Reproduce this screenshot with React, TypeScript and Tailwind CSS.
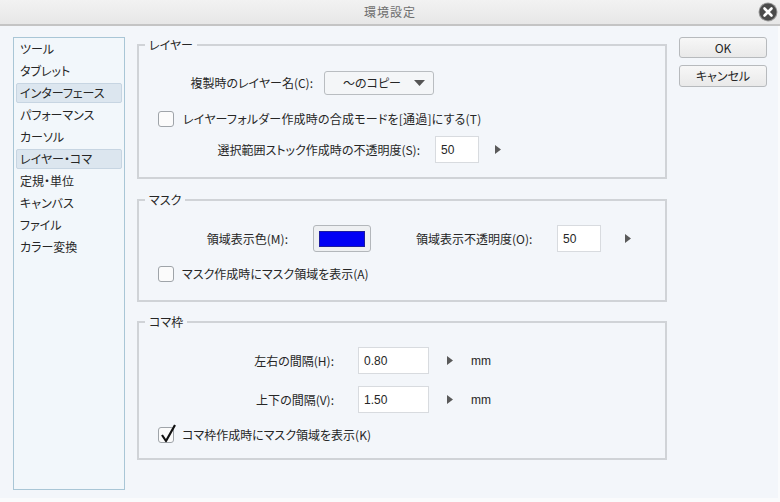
import React from 'react'

const categories = [
  'ツール',
  'タブレット',
  'インターフェース',
  'パフォーマンス',
  'カーソル',
  'レイヤー・コマ',
  '定規・単位',
  'キャンバス',
  'ファイル',
  'カラー変換',
]

// items drawn with the pale blue highlight
const highlighted = ['インターフェース', 'レイヤー・コマ']

function CloseIcon() {
  return (
    <svg width="20" height="20" viewBox="0 0 20 20">
      <circle cx="10" cy="10" r="9.5" fill="#9a9a9a" />
      <circle cx="10" cy="10" r="8.5" fill="#4b4b4b" />
      <path d="M6.5 6.5 L13.5 13.5 M13.5 6.5 L6.5 13.5" stroke="#ffffff" strokeWidth="2.6" strokeLinecap="round" />
    </svg>
  )
}

function RightArrow() {
  return (
    <svg width="6" height="9" viewBox="0 0 6 9" className="shrink-0">
      <path d="M0 0 L6 4.5 L0 9 Z" fill="#5a5a5a" />
    </svg>
  )
}

function Checkbox({ checked = false }: { checked?: boolean }) {
  return (
    <div className="relative w-[16px] h-[16px] shrink-0 rounded-[3px] border border-[#9fa4a9] bg-[#fbfbfb]">
      {checked && (
        <svg width="18" height="20" viewBox="0 0 18 20" className="absolute left-[1px] top-[-5px] overflow-visible">
          <path d="M2 12 L6 18 L15 2" fill="none" stroke="#111111" strokeWidth="2.2" strokeLinejoin="round" />
        </svg>
      )}
    </div>
  )
}

function NumberField({ value, width }: { value: string; width: string }) {
  return (
    <div className={`${width} h-[27px] shrink-0 flex items-center pl-[5px] bg-white border border-[#d8dbdf] text-[12px] font-['Liberation_Sans',sans-serif]`}>
      {value}
    </div>
  )
}

function Group({ title, children, className = '' }: { title: string; children: React.ReactNode; className?: string }) {
  return (
    <fieldset className={`border-2 border-[#d0d3d7] ${className}`}>
      <legend className="ml-[6px] px-[4px] leading-[16px] h-[16px]">{title}</legend>
      {children}
    </fieldset>
  )
}

export default function App() {
  return (
    <div className="w-[780px] h-[502px] bg-[#fafbfc] text-[12px] leading-[16px] text-[#262626] font-['Noto_Sans_CJK_JP',sans-serif] [font-feature-settings:'palt'] overflow-hidden">
      {/* title bar */}
      <div className="relative h-[26px] border-b-2 border-[#c4c4c4] bg-gradient-to-b from-[#f2f2f2] to-[#e7e7e7] flex items-center justify-center">
        <span className="text-[#6e6e6e] text-[12px] tracking-[1px]">環境設定</span>
        <div className="absolute right-[2px] top-[2px]">
          <CloseIcon />
        </div>
      </div>

      <div className="w-[778px] h-[472px] bg-[#f3f6fa] flex pt-[11px]">
        {/* category list */}
        <div className="ml-[13px] w-[112px] h-[453px] border border-[#a9c6d6] bg-[#f2f7fb] flex flex-col gap-[2px] pt-[1px]">
          {categories.map((c) => (
            <div
              key={c}
              className={`mx-[2px] h-[20px] shrink-0 flex items-center pl-[3px] rounded-[2px] border ${
                highlighted.includes(c) ? 'bg-[#dce6ef] border-[#c7d5e2]' : 'border-transparent'
              }`}
            >
              {c}
            </div>
          ))}
        </div>

        {/* settings groups */}
        <div className="ml-[12px] w-[530px] flex flex-col">
          <Group title="レイヤー" className="pb-[14px]">
            <div className="mt-[18px] h-[24px] flex items-center">
              <div className="w-[174px] text-right">複製時のレイヤー名(C):</div>
              <div className="ml-[11px] w-[110px] h-[24px] flex items-center justify-between pl-[18px] pr-[8px] rounded-[3px] border border-[#b9bdc1] bg-[#f4f6f8]">
                <span>～のコピー</span>
                <svg width="11" height="6" viewBox="0 0 11 6">
                  <path d="M0 0 L11 0 L5.5 6 Z" fill="#555555" />
                </svg>
              </div>
            </div>
            <div className="mt-[15px] h-[18px] flex items-center">
              <div className="ml-[19px]">
                <Checkbox />
              </div>
              <span className="ml-[9px] tracking-[0.2px]">レイヤーフォルダー作成時の合成モードを[通過]にする(T)</span>
            </div>
            <div className="mt-[8px] h-[27px] flex items-center">
              <div className="w-[281px] text-right">選択範囲ストック作成時の不透明度(S):</div>
              <div className="ml-[15px]">
                <NumberField value="50" width="w-[44px]" />
              </div>
              <div className="ml-[16px]">
                <RightArrow />
              </div>
            </div>
          </Group>

          <Group title="マスク" className="mt-[13px] pb-[18px]">
            <div className="mt-[17px] h-[27px] flex items-center">
              <div className="w-[149px] text-right">領域表示色(M):</div>
              <div className="ml-[25px] w-[58px] h-[27px] flex items-center justify-center rounded-[3px] border border-[#b3b7bb] bg-[#eef0f2]">
                <div className="w-[46px] h-[16px] bg-[#0000f5] border border-[#1b1b9c]" />
              </div>
              <div className="ml-[45px] w-[141px]">領域表示不透明度(O):</div>
              <NumberField value="50" width="w-[44px]" />
              <div className="ml-[24px]">
                <RightArrow />
              </div>
            </div>
            <div className="mt-[14px] h-[16px] flex items-center">
              <div className="ml-[19px]">
                <Checkbox />
              </div>
              <span className="ml-[8px]">マスク作成時にマスク領域を表示(A)</span>
            </div>
          </Group>

          <Group title="コマ枠" className="mt-[12px] pb-[15px]">
            <div className="mt-[17px] h-[27px] flex items-center">
              <div className="w-[195px] text-right">左右の間隔(H):</div>
              <div className="ml-[24px]">
                <NumberField value="0.80" width="w-[71px]" />
              </div>
              <div className="ml-[18px]">
                <RightArrow />
              </div>
              <span className="ml-[18px] font-['Liberation_Sans',sans-serif]">mm</span>
            </div>
            <div className="mt-[12px] h-[27px] flex items-center">
              <div className="w-[195px] text-right">上下の間隔(V):</div>
              <div className="ml-[24px]">
                <NumberField value="1.50" width="w-[71px]" />
              </div>
              <div className="ml-[18px]">
                <RightArrow />
              </div>
              <span className="ml-[18px] font-['Liberation_Sans',sans-serif]">mm</span>
            </div>
            <div className="mt-[14px] h-[16px] flex items-center">
              <div className="ml-[19px]">
                <Checkbox checked />
              </div>
              <span className="ml-[8px]">コマ枠作成時にマスク領域を表示(K)</span>
            </div>
          </Group>
        </div>

        {/* dialog buttons */}
        <div className="ml-[12px] w-[88px] flex flex-col gap-[7px]">
          <button className="h-[21px] rounded-[3px] border border-[#b7babd] bg-gradient-to-b from-[#f7f7f7] to-[#e9e9e9] leading-[16px]">
            OK
          </button>
          <button className="h-[22px] rounded-[3px] border border-[#b7babd] bg-gradient-to-b from-[#f7f7f7] to-[#e9e9e9] leading-[16px]">
            キャンセル
          </button>
        </div>
      </div>
    </div>
  )
}
